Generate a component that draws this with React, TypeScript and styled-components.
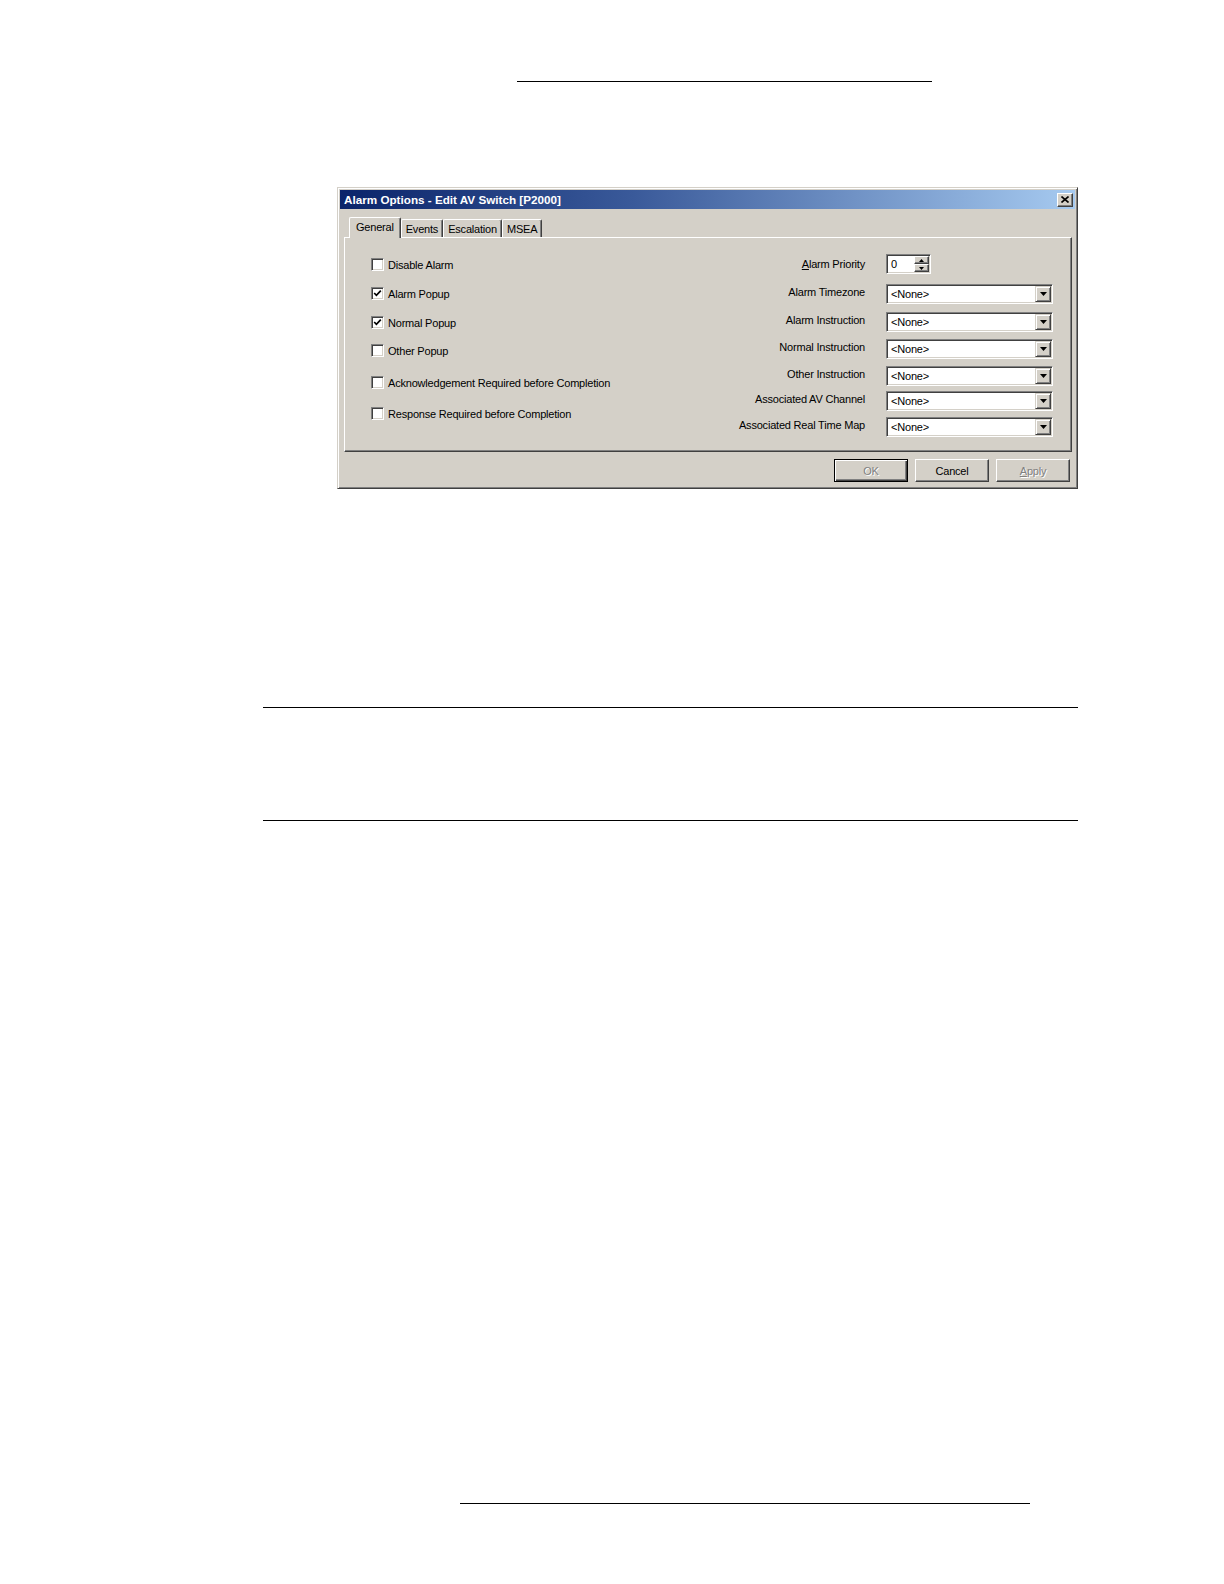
import React from "react";
import styled, { createGlobalStyle } from "styled-components";

const Global = createGlobalStyle`
  html, body { margin: 0; padding: 0; background: #ffffff; }
  body { font-family: "Liberation Sans", Arial, sans-serif; }
  * { box-sizing: border-box; }
`;

const Page = styled.div`
  width: 1224px;
  min-height: 1584px;
  display: flex;
  flex-direction: column;
  background: #fff;
`;

const Rule = styled.div<{ $top: number; $left: number; $width: number }>`
  margin-top: ${(p) => p.$top}px;
  margin-left: ${(p) => p.$left}px;
  width: ${(p) => p.$width}px;
  height: 1px;
  background: #000;
  flex: none;
`;

const Dialog = styled.div`
  margin-top: 105px;
  margin-left: 337px;
  width: 741px;
  height: 302px;
  flex: none;
  background: #d4d0c8;
  border: 1px solid;
  border-color: #d4d0c8 #404040 #404040 #d4d0c8;
  box-shadow: inset 1px 1px 0 #ffffff, inset -1px -1px 0 #808080;
  padding: 2px;
  display: flex;
  flex-direction: column;
  font-size: 11px;
  letter-spacing: -0.2px;
  color: #000;
`;

const TitleBar = styled.div`
  height: 19px;
  flex: none;
  display: flex;
  align-items: center;
  justify-content: space-between;
  padding: 0 2px 0 4px;
  background: linear-gradient(90deg, #0a246a 0%, #3a5a9a 40%, #a6caf0 100%);
`;

const TitleText = styled.span`
  color: #fff;
  font-weight: bold;
  font-size: 11.7px;
  letter-spacing: 0;
  white-space: nowrap;
`;

const CloseButton = styled.div`
  width: 16px;
  height: 14px;
  background: #d4d0c8;
  border: 1px solid;
  border-color: #ffffff #404040 #404040 #ffffff;
  box-shadow: inset -1px -1px 0 #808080;
  display: flex;
  align-items: center;
  justify-content: center;
`;

const Body = styled.div`
  flex: 1;
  display: flex;
  flex-direction: column;
  padding: 8px 3px 0 4px;
`;

const TabStrip = styled.div`
  height: 20px;
  flex: none;
  display: flex;
  align-items: flex-end;
  padding-left: 5px;
  position: relative;
  z-index: 2;
`;

const Tab = styled.div<{ $active?: boolean }>`
  height: ${(p) => (p.$active ? 21 : 18)}px;
  margin-bottom: ${(p) => (p.$active ? -1 : 0)}px;
  padding: ${(p) => (p.$active ? "0 6px 3px 6px" : "0 4px 0 4px")};
  display: flex;
  align-items: center;
  background: #d4d0c8;
  border-left: 1px solid #ffffff;
  border-top: 1px solid #ffffff;
  border-right: 1px solid #404040;
  box-shadow: inset -1px 0 0 #808080;
  border-top-left-radius: 2px;
  border-top-right-radius: 2px;
  white-space: nowrap;
  font-size: 11px;
`;

const Panel = styled.div`
  height: 215px;
  flex: none;
  border: 1px solid;
  border-color: #ffffff #404040 #404040 #ffffff;
  box-shadow: inset -1px -1px 0 #808080;
  display: flex;
  justify-content: space-between;
  position: relative;
  z-index: 1;
`;

const LeftCol = styled.div`
  display: flex;
  flex-direction: column;
  padding: 20px 0 0 26px;
`;

const CheckRow = styled.div<{ $mt: number }>`
  margin-top: ${(p) => p.$mt}px;
  height: 13px;
  display: flex;
  align-items: center;
  gap: 4px;
  white-space: nowrap;
`;

const CheckBox = styled.div`
  width: 13px;
  height: 13px;
  flex: none;
  background: #fff;
  border: 1px solid;
  border-color: #808080 #ffffff #ffffff #808080;
  box-shadow: inset 1px 1px 0 #404040, inset -1px -1px 0 #d4d0c8;
  display: flex;
  align-items: center;
  justify-content: center;
`;

const RightCol = styled.div`
  display: flex;
  flex-direction: column;
  padding: 16px 18px 0 0;
`;

const FieldRow = styled.div<{ $mt: number }>`
  margin-top: ${(p) => p.$mt}px;
  height: 20px;
  display: flex;
  align-items: center;
  justify-content: flex-end;
  gap: 21px;
`;

const FieldLabel = styled.span<{ $lift: number }>`
  text-align: right;
  white-space: nowrap;
  padding-bottom: ${(p) => p.$lift}px;
`;

const ControlSlot = styled.div`
  width: 167px;
  height: 20px;
  display: flex;
  justify-content: flex-start;
`;

const Sunken = styled.div<{ $width: number }>`
  width: ${(p) => p.$width}px;
  height: 20px;
  background: #fff;
  border: 1px solid;
  border-color: #808080 #ffffff #ffffff #808080;
  box-shadow: inset 1px 1px 0 #404040, inset -1px -1px 0 #d4d0c8;
  padding: 1px;
  display: flex;
  align-items: stretch;
`;

const FieldText = styled.span`
  flex: 1;
  display: flex;
  align-items: center;
  padding-left: 3px;
  white-space: nowrap;
`;

const DropButton = styled.div`
  width: 16px;
  flex: none;
  background: #d4d0c8;
  border: 1px solid;
  border-color: #d4d0c8 #404040 #404040 #d4d0c8;
  box-shadow: inset 1px 1px 0 #ffffff, inset -1px -1px 0 #808080;
  display: flex;
  align-items: center;
  justify-content: center;
`;

const SpinStack = styled.div`
  width: 15px;
  flex: none;
  display: flex;
  flex-direction: column;
`;

const SpinButton = styled.div`
  flex: 1;
  background: #d4d0c8;
  border: 1px solid;
  border-color: #ffffff #404040 #404040 #ffffff;
  box-shadow: inset -1px -1px 0 #808080;
  display: flex;
  align-items: center;
  justify-content: center;
`;

const ButtonRow = styled.div`
  display: flex;
  justify-content: flex-end;
  gap: 7px;
  padding: 7px 2px 0 0;
`;

const PushButton = styled.div<{ $disabled?: boolean; $default?: boolean }>`
  width: 74px;
  height: 23px;
  display: flex;
  align-items: center;
  justify-content: center;
  background: #d4d0c8;
  font-size: 11px;
  color: ${(p) => (p.$disabled ? "#808080" : "#000")};
  text-shadow: ${(p) => (p.$disabled ? "1px 1px 0 #ffffff" : "none")};
  border: 1px solid;
  border-color: ${(p) =>
    p.$default ? "#000 #000 #000 #000" : "#ffffff #404040 #404040 #ffffff"};
  box-shadow: ${(p) =>
    p.$default
      ? "inset 1px 1px 0 #ffffff, inset -1px -1px 0 #404040, inset -2px -2px 0 #808080"
      : "inset -1px -1px 0 #808080"};
`;

const Mnemonic = styled.span`
  text-decoration: underline;
  text-underline-offset: 1px;
`;

const Check = () => (
  <svg width="9" height="9" viewBox="0 0 9 9">
    <polyline points="1.2,4 3.4,6.3 7.8,1.6" fill="none" stroke="#000" strokeWidth="1.7" />
  </svg>
);

const DownTri = () => (
  <svg width="7" height="4" viewBox="0 0 7 4">
    <polygon points="0,0 7,0 3.5,4" fill="#000" />
  </svg>
);

const SmallTri = ({ up }: { up?: boolean }) => (
  <svg width="5" height="3" viewBox="0 0 5 3">
    <polygon points={up ? "0,3 5,3 2.5,0" : "0,0 5,0 2.5,3"} fill="#000" />
  </svg>
);

const CloseGlyph = () => (
  <svg width="8" height="7" viewBox="0 0 8 7">
    <path d="M0.5 0.5 L7.5 6.5 M7.5 0.5 L0.5 6.5" stroke="#000" strokeWidth="1.6" />
  </svg>
);

const checks: { label: string; checked: boolean; mt: number }[] = [
  { label: "Disable Alarm", checked: false, mt: 0 },
  { label: "Alarm Popup", checked: true, mt: 16 },
  { label: "Normal Popup", checked: true, mt: 16 },
  { label: "Other Popup", checked: false, mt: 15 },
  { label: "Acknowledgement Required before Completion", checked: false, mt: 19 },
  { label: "Response Required before Completion", checked: false, mt: 18 },
];

const combos: { label: string; mt: number }[] = [
  { label: "Alarm Timezone", mt: 10 },
  { label: "Alarm Instruction", mt: 8 },
  { label: "Normal Instruction", mt: 7 },
  { label: "Other Instruction", mt: 7 },
  { label: "Associated AV Channel", mt: 5 },
  { label: "Associated Real Time Map", mt: 6 },
];

export default function App() {
  return (
    <Page>
      <Global />
      <Rule $top={81} $left={517} $width={415} />
      <Dialog>
        <TitleBar>
          <TitleText>Alarm Options - Edit AV Switch [P2000]</TitleText>
          <CloseButton>
            <CloseGlyph />
          </CloseButton>
        </TitleBar>
        <Body>
          <TabStrip>
            <Tab $active>General</Tab>
            <Tab>Events</Tab>
            <Tab>Escalation</Tab>
            <Tab>MSEA</Tab>
          </TabStrip>
          <Panel>
            <LeftCol>
              {checks.map((c) => (
                <CheckRow key={c.label} $mt={c.mt}>
                  <CheckBox>{c.checked && <Check />}</CheckBox>
                  <span>{c.label}</span>
                </CheckRow>
              ))}
            </LeftCol>
            <RightCol>
              <FieldRow $mt={0}>
                <FieldLabel $lift={1}>
                  <Mnemonic>A</Mnemonic>larm Priority
                </FieldLabel>
                <ControlSlot>
                  <Sunken $width={45}>
                    <FieldText>0</FieldText>
                    <SpinStack>
                      <SpinButton>
                        <SmallTri up />
                      </SpinButton>
                      <SpinButton>
                        <SmallTri />
                      </SpinButton>
                    </SpinStack>
                  </Sunken>
                </ControlSlot>
              </FieldRow>
              {combos.map((c) => (
                <FieldRow key={c.label} $mt={c.mt}>
                  <FieldLabel $lift={4}>{c.label}</FieldLabel>
                  <ControlSlot>
                    <Sunken $width={167}>
                      <FieldText>&lt;None&gt;</FieldText>
                      <DropButton>
                        <DownTri />
                      </DropButton>
                    </Sunken>
                  </ControlSlot>
                </FieldRow>
              ))}
            </RightCol>
          </Panel>
          <ButtonRow>
            <PushButton $disabled $default>
              OK
            </PushButton>
            <PushButton>Cancel</PushButton>
            <PushButton $disabled>
              <Mnemonic>A</Mnemonic>pply
            </PushButton>
          </ButtonRow>
        </Body>
      </Dialog>
      <Rule $top={218} $left={263} $width={815} />
      <Rule $top={112} $left={263} $width={815} />
      <Rule $top={682} $left={460} $width={570} />
    </Page>
  );
}
